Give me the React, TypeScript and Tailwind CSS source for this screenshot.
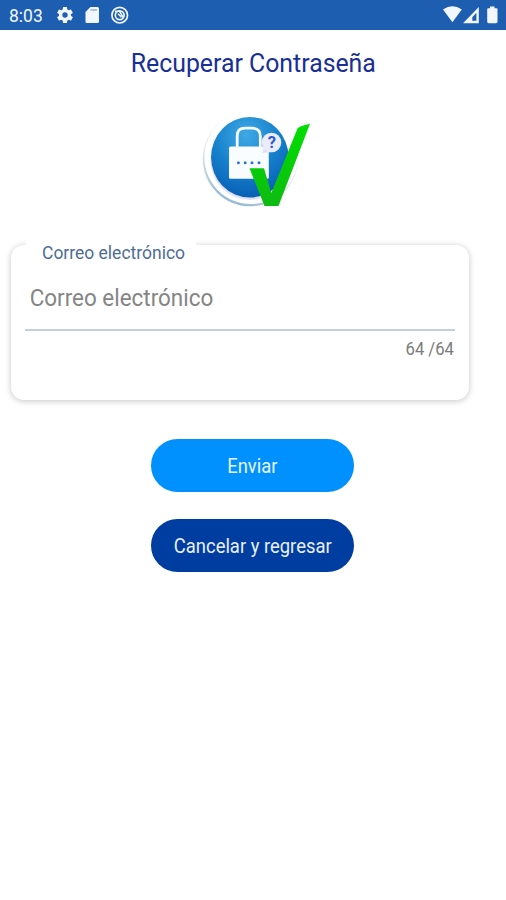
function StatusBar() {
  return (
    <header className="flex h-[30px] w-full items-center bg-[#1d5eb0] text-[#f1f6ff]">
      <span className="ml-[9px] w-[46px] origin-left scale-x-[0.92] pt-px text-[19px] leading-[30px]">8:03</span>
      <svg className="h-[20px] w-[20px]" viewBox="0 0 24 24" fill="currentColor">
        <path d="M19.14 12.94c.04-.3.06-.61.06-.94s-.02-.64-.07-.94l2.03-1.58a.49.49 0 0 0 .12-.61l-1.92-3.32a.49.49 0 0 0-.59-.22l-2.39.96a7 7 0 0 0-1.62-.94l-.36-2.54a.48.48 0 0 0-.48-.41h-3.84a.48.48 0 0 0-.47.41l-.36 2.54a7.4 7.4 0 0 0-1.62.94l-2.39-.96a.48.48 0 0 0-.59.22L2.74 8.87a.48.48 0 0 0 .12.61l2.03 1.58a6 6 0 0 0-.02 1.88l-2.03 1.58a.49.49 0 0 0-.12.61l1.92 3.32c.12.22.37.29.59.22l2.39-.96c.5.38 1.03.7 1.62.94l.36 2.54c.05.24.24.41.48.41h3.84c.24 0 .44-.17.47-.41l.36-2.54a7 7 0 0 0 1.62-.94l2.39.96c.22.08.47 0 .59-.22l1.92-3.32a.48.48 0 0 0-.12-.61zM12 15.2a3.2 3.2 0 1 1 0-6.4 3.2 3.2 0 0 1 0 6.4z" />
      </svg>
      <svg className="ml-[10px] h-[18px] w-[15px]" viewBox="0 0 15 18">
        <path d="M5.4 1H12.5Q14 1 14 2.5V15.500Q14 17 12.500 17H2Q.5 17 .5 15.500V6z" fill="currentColor" />
        <path d="M5.500 4H12" stroke="#8fb0dc" strokeWidth="1.400" />
      </svg>
      <svg className="ml-[10px] h-[20px] w-[20px]" viewBox="0 0 20 20" fill="none" stroke="currentColor">
        <circle cx="9.700" cy="10.200" r="7.800" strokeWidth="1.700" />
        <circle cx="9.700" cy="10.200" r="4.400" strokeWidth="1.700" />
        <path d="M5 6.300H9.500L13.500 13" strokeWidth="1.500" />
        <path d="M8 8.800l3.500 3.500" strokeWidth="1.600" />
      </svg>
      <svg className="ml-auto h-[18px] w-[63px]" viewBox="0 0 63 18" fill="currentColor">
        <path d="M0 3.600Q9.500-3.200 18.800 3.600L9.400 16.200z" />
        <path fillRule="evenodd" d="M20 17.300L35.800 1V17.300zM29.300 14.800H33.400V6.800L29.300 11.300z" />
        <path d="M44.200 3.200Q44.200 2.200 45.200 2.200H47V.5H51.500V2.200H53.500Q54.500 2.200 54.500 3.200V15.800Q54.500 17.200 53.100 17.200H45.600Q44.200 17.200 44.200 15.800z" />
      </svg>
    </header>
  );
}

function LockLogo() {
  return (
    <svg className="h-[110px] w-[120px]" viewBox="200 105 120 110">
      <defs>
        <radialGradient id="disc" cx=".45" cy=".22" r=".85">
          <stop offset="0" stopColor="#3fa9e6" />
          <stop offset=".5" stopColor="#1680cc" />
          <stop offset="1" stopColor="#0559b0" />
        </radialGradient>
        <linearGradient id="rim" x1=".7" y1="0" x2=".3" y2="1">
          <stop offset="0" stopColor="#f8f9fa" />
          <stop offset=".6" stopColor="#dfe8ef" />
          <stop offset="1" stopColor="#8fb6d3" />
        </linearGradient>
        <linearGradient id="check" x1="0" y1="0" x2="0" y2="1">
          <stop offset="0" stopColor="#00df00" />
          <stop offset="1" stopColor="#0fba12" />
        </linearGradient>
      </defs>
      <circle cx="250.300" cy="158.800" r="47.500" fill="url(#rim)" />
      <circle cx="250.900" cy="157.500" r="46.500" fill="#fff" />
      <ellipse cx="249.800" cy="159.500" rx="39.500" ry="40.500" fill="#e3e0fb" />
      <ellipse cx="249.800" cy="157.300" rx="38.700" ry="40.300" fill="url(#disc)" />
      <path d="M237.200 149V136Q237.200 128.200 245 128.200H252Q260.300 128.200 260.300 136V149" fill="none" stroke="#f5fbff" strokeWidth="2.800" />
      <rect x="229" y="146.500" width="39.800" height="32.300" rx="1.500" fill="#fafdff" />
      <g fill="#2d78d9">
        <circle cx="238.400" cy="162.800" r="1.500" />
        <circle cx="245.200" cy="162.800" r="1.500" />
        <circle cx="252" cy="162.800" r="1.500" />
        <circle cx="259" cy="162.800" r="1.500" />
      </g>
      <path d="M264 147L262.500 153L272 152z" fill="#dcdff6" />
      <circle cx="271.500" cy="142.500" r="9.800" fill="#ecebfb" />
      <text x="271.800" y="148" textAnchor="middle" fontSize="16.500" fontWeight="700" fill="#285bd0">?</text>
      <path d="M249.500 168.300H264L271.300 193L297.500 128.500Q298.500 126.500 310 123.700L278.500 206H264.500z" fill="url(#check)" />
    </svg>
  );
}

function EmailField() {
  return (
    <section className="relative mt-[30px] ml-[11px] flex h-[155px] w-[458px] flex-col rounded-[13px] bg-white px-[14px] shadow-[0_1px_6px_rgba(0,0,0,0.23)]">
      <label htmlFor="email" className="absolute -top-[5px] left-[15px] h-[24px] w-[170px] bg-white pl-[16px] text-[19px] leading-[25px] text-[#4d6c98]">
        <span className="inline-block origin-left scale-x-[0.92] whitespace-nowrap">Correo electrónico</span>
      </label>
      <div className="mt-[30px] h-[56px] w-full border-b-2 border-[#c5cede]">
        <input
          id="email"
          type="email"
          placeholder="Correo electrónico"
          className="block h-[46px] w-full origin-left scale-x-[0.935] bg-transparent pl-[5px] text-[24px] text-[#858585] outline-none placeholder:text-[#858585] placeholder:opacity-100"
        />
      </div>
      <span className="mt-[6px] mr-[1px] origin-right scale-x-[0.95] self-end text-[17.5px] leading-[24px] text-[#7c7c7c]">64 /64</span>
    </section>
  );
}

export default function App() {
  return (
    <div className="h-[900px] w-[506px] overflow-hidden bg-white font-['Roboto',sans-serif]">
      <StatusBar />
      <main className="flex flex-col">
        <h1 className="mt-[15px] self-center text-[26px] leading-[36px] whitespace-nowrap text-[#182f96]">
          <span className="inline-block scale-x-[0.955]">Recuperar Contraseña</span>
        </h1>
        <div className="mt-[24px] ml-[200px] flex">
          <LockLogo />
        </div>
        <EmailField />
        <div className="mt-[39px] flex w-[505px] flex-col items-center gap-[27px] text-[20px]">
          <button className="h-[53px] w-[203px] rounded-[27px] bg-[#0091ff] pt-px text-[#e7f5ff]">
            <span className="inline-block scale-x-[0.92]">Enviar</span>
          </button>
          <button className="h-[53px] w-[203px] rounded-[27px] bg-[#003da0] pt-px whitespace-nowrap text-[#eaf0fb]">
            <span className="inline-block scale-x-[0.92]">Cancelar y regresar</span>
          </button>
        </div>
      </main>
    </div>
  );
}
